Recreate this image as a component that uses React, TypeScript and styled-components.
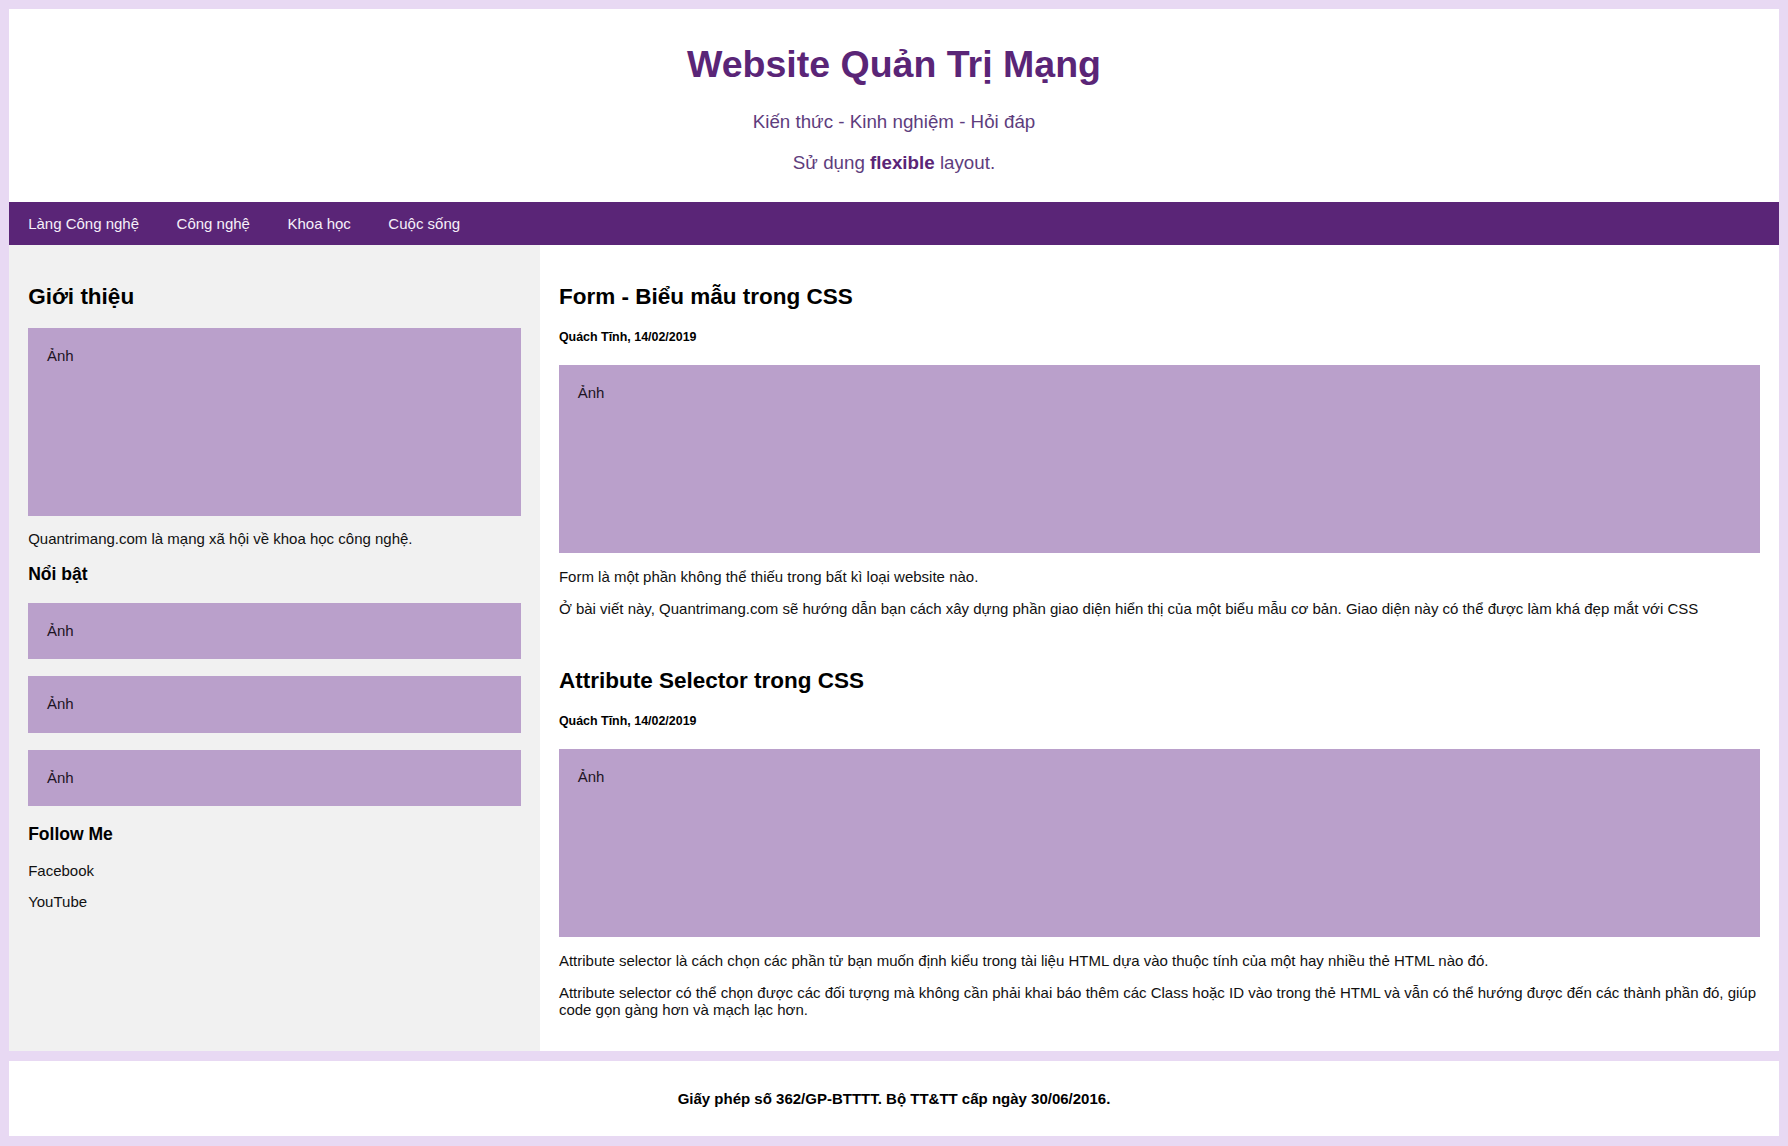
import React from "react";
import styled, { createGlobalStyle } from "styled-components";

const GlobalStyle = createGlobalStyle`
  * { box-sizing: border-box; }
  html, body { margin: 0; }
  body {
    padding: 9.375px;
    background: #e8d9f3;
    font-family: "Liberation Sans", Arial, sans-serif;
    font-size: 15px;
    color: #000;
  }
`;

const Header = styled.header`
  padding: 9.375px;
  text-align: center;
  background: #ffffff;
  color: #5a2577;
`;

const SiteTitle = styled.h1`
  font-size: 37.5px;
  font-weight: bold;
  margin: 24.6px 0;
`;

const Tagline = styled.p`
  font-size: 18.75px;
  margin: 18.75px 0;
  color: #5e3d7d;

  b {
    color: #5a2577;
  }
`;

const NavBar = styled.nav`
  display: flex;
  background-color: #5a2577;
`;

const NavLink = styled.a`
  display: block;
  color: #f6f0fa;
  padding: 13.125px 18.75px;
  text-decoration: none;
  font-size: 15px;
`;

const Row = styled.div`
  display: flex;
`;

const Side = styled.aside`
  flex: 30%;
  background-color: #f1f1f1;
  padding: 19.9px 18.75px 18.75px;
`;

const Main = styled.main`
  flex: 70%;
  background-color: #ffffff;
  padding: 19.9px 18.75px 18.75px;
`;

const SectionTitle = styled.h2`
  font-size: 22.5px;
  margin: 18.675px 0;
`;

const SubTitle = styled.h3`
  font-size: 17.55px;
  margin: 17.55px 0;
`;

const Meta = styled.h5`
  font-size: 12.45px;
  margin: 20.8px 0;
`;

const FakeImg = styled.div<{ $h: number }>`
  background-color: #baa0cb;
  width: 100%;
  padding: 18.75px;
  height: ${(p) => p.$h}px;
  color: #1d1424;
`;

const Text = styled.p`
  margin: 15px 0;
  color: #111;
`;

const SideText = styled(Text)`
  margin: 14px 0;
`;

const FeatureList = styled.div`
  display: flex;
  flex-direction: column;
  gap: 17.25px;
`;

const Article = styled.article`
  & + & {
    padding-top: 17.25px;
  }
`;

const Footer = styled.footer`
  margin-top: 9.375px;
  padding: 9.375px;
  text-align: center;
  background: #ffffff;
`;

const FooterText = styled.h4`
  font-size: 15px;
  margin: 19.95px 0;
`;

const articles = [
  {
    title: "Form - Biểu mẫu trong CSS",
    meta: "Quách Tĩnh, 14/02/2019",
    paras: [
      "Form là một phần không thể thiếu trong bất kì loại website nào.",
      "Ở bài viết này, Quantrimang.com sẽ hướng dẫn bạn cách xây dựng phần giao diện hiển thị của một biểu mẫu cơ bản. Giao diện này có thể được làm khá đẹp mắt với CSS",
    ],
  },
  {
    title: "Attribute Selector trong CSS",
    meta: "Quách Tĩnh, 14/02/2019",
    paras: [
      "Attribute selector là cách chọn các phần tử bạn muốn định kiểu trong tài liệu HTML dựa vào thuộc tính của một hay nhiều thẻ HTML nào đó.",
      "Attribute selector có thể chọn được các đối tượng mà không cần phải khai báo thêm các Class hoặc ID vào trong thẻ HTML và vẫn có thể hướng được đến các thành phần đó, giúp code gọn gàng hơn và mạch lạc hơn.",
    ],
  },
];

export default function App() {
  return (
    <>
      <GlobalStyle />
      <Header>
        <SiteTitle>Website Quản Trị Mạng</SiteTitle>
        <Tagline>Kiến thức - Kinh nghiệm - Hỏi đáp</Tagline>
        <Tagline>
          Sử dụng <b>flexible</b> layout.
        </Tagline>
      </Header>
      <NavBar>
        <NavLink href="#">Làng Công nghệ</NavLink>
        <NavLink href="#">Công nghệ</NavLink>
        <NavLink href="#">Khoa học</NavLink>
        <NavLink href="#">Cuộc sống</NavLink>
      </NavBar>
      <Row>
        <Side>
          <SectionTitle>Giới thiệu</SectionTitle>
          <FakeImg $h={187.5}>Ảnh</FakeImg>
          <SideText>Quantrimang.com là mạng xã hội về khoa học công nghệ.</SideText>
          <SubTitle>Nổi bật</SubTitle>
          <FeatureList>
            <FakeImg $h={56.25}>Ảnh</FakeImg>
            <FakeImg $h={56.25}>Ảnh</FakeImg>
            <FakeImg $h={56.25}>Ảnh</FakeImg>
          </FeatureList>
          <SubTitle>Follow Me</SubTitle>
          <SideText>Facebook</SideText>
          <SideText>YouTube</SideText>
        </Side>
        <Main>
          {articles.map((a) => (
            <Article key={a.title}>
              <SectionTitle>{a.title}</SectionTitle>
              <Meta>{a.meta}</Meta>
              <FakeImg $h={187.5}>Ảnh</FakeImg>
              {a.paras.map((p) => (
                <Text key={p}>{p}</Text>
              ))}
            </Article>
          ))}
        </Main>
      </Row>
      <Footer>
        <FooterText>Giấy phép số 362/GP-BTTTT. Bộ TT&amp;TT cấp ngày 30/06/2016.</FooterText>
      </Footer>
    </>
  );
}
